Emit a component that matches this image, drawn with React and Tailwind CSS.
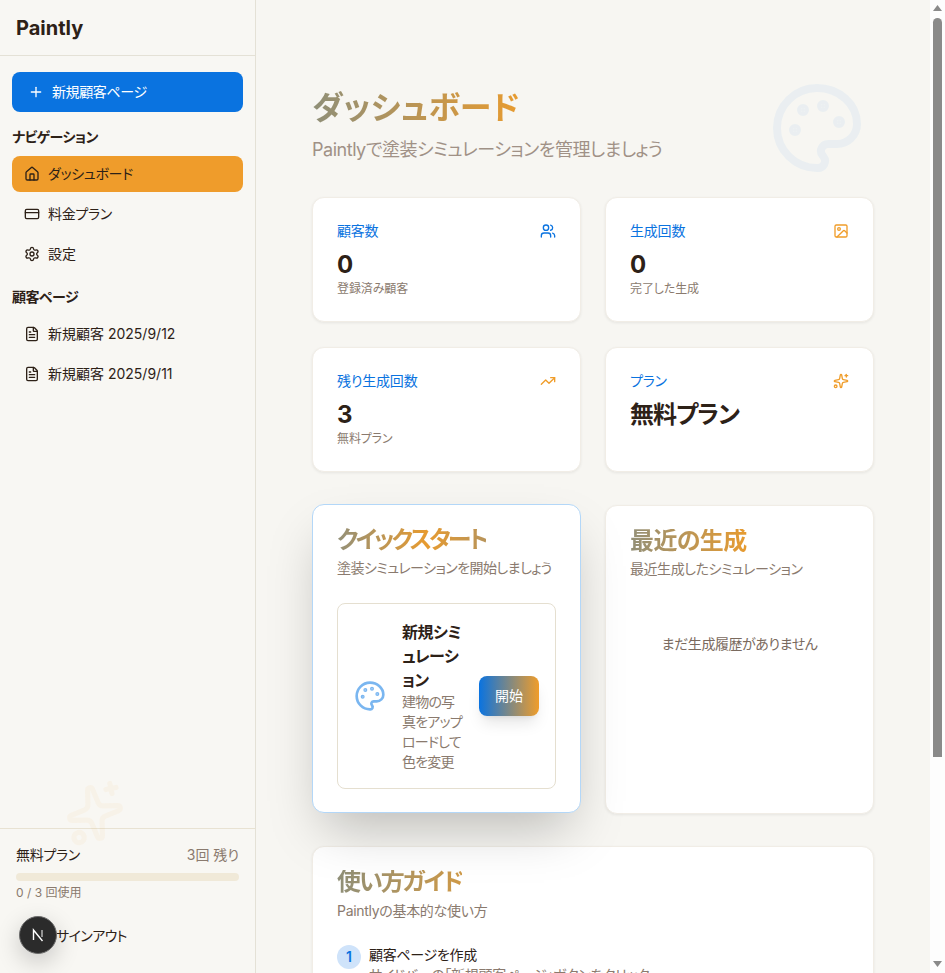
import React from "react";
import { Plus, House, CreditCard, Settings, FileText, Users, Image, TrendingUp, Sparkles, Palette } from "lucide-react";

function NavItem({ icon: Icon, label, active, tight }) {
  return (
    <a className={`flex h-9 items-center gap-2 rounded-lg px-3 text-sm text-[#2d2117] ${tight ? "tracking-[-0.3px]" : ""} ${active ? "bg-[#ef9c2b]" : ""}`}>
      <Icon size={16} strokeWidth={2} className="shrink-0" />
      <span>{label}</span>
    </a>
  );
}

function Stat({ title, value, note, icon: Icon, iconClass, valueClass }) {
  return (
    <div className="h-[125px] rounded-xl border border-[#f1ede6] bg-white px-6 pt-[23px] shadow-[0_1px_3px_rgba(0,0,0,0.07)]">
      <div className="flex items-center justify-between pb-[8px]">
        <span className="text-sm leading-5 tracking-[-0.2px] text-[#0a73e0]">{title}</span>
        <Icon size={16} className={iconClass} />
      </div>
      <div className={`text-2xl leading-8 font-bold text-[#2d2117] ${valueClass || ""}`}>{value}</div>
      {note && <div className="text-xs leading-4 tracking-[-0.1px] text-[#8a7a6e]">{note}</div>}
    </div>
  );
}

function Step({ n, title, desc }) {
  return (
    <div className="flex gap-2">
      <div className="flex size-6 shrink-0 items-center justify-center rounded-full bg-[#cfe3fa] text-sm font-semibold text-[#0a73e0]">{n}</div>
      <div>
        <div className="text-sm leading-5 tracking-[-0.3px] text-[#2d2117]">{title}</div>
        <div className="text-sm leading-5 tracking-[-0.3px] text-[#8a7a6e]">{desc}</div>
      </div>
    </div>
  );
}

function CardTitle({ children, className }) {
  return (
    <h2 className={`block w-fit bg-clip-text text-2xl leading-6 font-semibold text-transparent ${className}`}>{children}</h2>
  );
}

function ScrollBar() {
  return (
    <div className="sticky top-0 flex h-screen w-[15px] shrink-0 flex-col items-center bg-[#fdfdfd]">
      <svg width="9" height="6" viewBox="0 0 9 6" className="mt-[5px] shrink-0"><path d="M4.5 0L9 6H0Z" fill="#8a8a8a" /></svg>
      <div className="mt-[7px] h-[739px] w-[9px] shrink-0 rounded-t-full rounded-b-[4px] bg-[#8a8a8a]" />
      <svg width="9" height="6" viewBox="0 0 9 6" className="mt-[204px] shrink-0"><path d="M0 0H9L4.5 6Z" fill="#8a8a8a" /></svg>
    </div>
  );
}

export default function App() {
  return (
    <div className="flex min-h-screen bg-[#f7f6f2] font-['Inter','Noto_Sans_CJK_JP',sans-serif] [font-feature-settings:'palt']">
      <aside className="sticky top-0 flex h-screen w-64 shrink-0 flex-col border-r border-[#e4e1d6] bg-[#f8f7f3]">
        <div className="flex h-14 items-center border-b border-[#e4e1d6] px-4">
          <span className="text-xl font-bold text-[#2d2117]">Paintly</span>
        </div>
        <div className="flex flex-1 flex-col px-3 pt-4">
          <button className="flex h-10 items-center gap-2 rounded-lg bg-[#0a73e0] px-4 text-sm tracking-[-0.4px] text-white">
            <Plus size={16} />
            新規顧客ページ
          </button>
          <div className="mt-[15px] mb-[9px] text-sm leading-5 font-semibold tracking-[-0.5px] text-[#2d2117]">ナビゲーション</div>
          <nav className="flex flex-col gap-1">
            <NavItem icon={House} label="ダッシュボード" active tight />
            <NavItem icon={CreditCard} label="料金プラン" tight />
            <NavItem icon={Settings} label="設定" />
          </nav>
          <div className="mt-[15px] mb-[9px] text-sm leading-5 font-semibold tracking-[-0.5px] text-[#2d2117]">顧客ページ</div>
          <nav className="flex flex-col gap-1">
            <NavItem icon={FileText} label="新規顧客 2025/9/12" />
            <NavItem icon={FileText} label="新規顧客 2025/9/11" />
          </nav>
        </div>
        <div className="border-t border-[#e8e2d2] px-4 pt-4 pb-[17px]">
          <div className="flex items-center justify-between text-sm leading-5">
            <span className="tracking-[-0.3px] text-[#2d2117]">無料プラン</span>
            <span className="text-[#8a7a6e]">3回 残り</span>
          </div>
          <div className="mt-2 h-2 rounded-full bg-[#f0e9d8]" />
          <div className="mt-1 text-xs leading-4 text-[#8a7a6e]">0 / 3 回使用</div>
          <div className="mt-[15px] flex h-10 items-center pl-10 text-sm tracking-[-0.6px] text-[#2d2117]">サインアウト</div>
        </div>
        <Sparkles size={62} strokeWidth={2} className="absolute top-[782px] left-[64px] -rotate-12 text-[#f09d2a] opacity-[0.05]" />
      </aside>

      <main className="relative min-w-0 flex-1 px-14 pt-[85px] pb-14">
        <Palette size={96} strokeWidth={2} className="absolute top-[80px] left-[513px] text-[#0a73e0] opacity-[0.05]" />
        <h1 className="block w-fit bg-[linear-gradient(90deg,#8f8f78,#e79b30)] bg-clip-text text-[32px] leading-[46px] font-bold tracking-[0.3px] text-transparent">ダッシュボード</h1>
        <p className="mt-[7px] text-lg leading-6 tracking-[-0.47px] text-[#a09186]">Paintlyで塗装シミュレーションを管理しましょう</p>

        <div className="mt-[35px] grid grid-cols-2 gap-x-6 gap-y-[25px]">
          <Stat title="顧客数" value="0" note="登録済み顧客" icon={Users} iconClass="text-[#0a73e0]" />
          <Stat title="生成回数" value="0" note="完了した生成" icon={Image} iconClass="text-[#f09d2a]" />
          <Stat title="残り生成回数" value="3" note="無料プラン" icon={TrendingUp} iconClass="text-[#f09d2a]" />
          <Stat title="プラン" value="無料プラン" valueClass="tracking-[-1px]" icon={Sparkles} iconClass="text-[#f09d2a]" />
        </div>

        <div className="mt-[33px] grid grid-cols-2 gap-6">
          <section className="h-[309px] -translate-y-px rounded-xl border border-[#b3d7f8] bg-white px-6 pt-[23px] shadow-2xl">
            <CardTitle className="bg-[linear-gradient(90deg,#939078,#e79b30_60%,#b8945a)] tracking-[-2.9px]">クイックスタート</CardTitle>
            <p className="mt-[6px] text-sm leading-5 tracking-[-0.55px] text-[#8a7a6e]">塗装シミュレーションを開始しましょう</p>
            <div className="mt-[25px] flex items-center gap-4 rounded-lg border border-[#e5dfd0] p-4">
              <Palette size={32} className="shrink-0 text-[#7ab6f0]" />
              <div className="min-w-0 flex-1 [line-break:anywhere]">
                <div className="text-base leading-6 font-semibold tracking-[-0.5px] text-[#2d2117]">新規シミュレーション</div>
                <div className="text-sm leading-5 tracking-[-0.8px] text-[#8a7a6e]">建物の写真をアップロードして色を変更</div>
              </div>
              <button className="h-10 w-[60px] shrink-0 rounded-lg bg-[linear-gradient(90deg,#0a73e0,#f09d2a)] text-sm text-white shadow-lg">開始</button>
            </div>
          </section>
          <section className="h-[309px] rounded-xl border border-[#f1ede6] bg-white px-6 pt-[23px] shadow-[0_1px_3px_rgba(0,0,0,0.07)]">
            <CardTitle className="bg-[linear-gradient(90deg,#939078,#e79b30)] tracking-[-0.6px]">最近の生成</CardTitle>
            <p className="mt-[6px] text-sm leading-5 tracking-[-0.45px] text-[#8a7a6e]">最近生成したシミュレーション</p>
            <p className="pt-[55px] text-center text-sm leading-5 tracking-[-0.45px] text-[#7a6a5e]">まだ生成履歴がありません</p>
          </section>
        </div>

        <section className="mt-[32px] rounded-xl border border-[#f1ede6] bg-white px-6 pt-[23px] pb-6 shadow-[0_1px_3px_rgba(0,0,0,0.07)]">
          <CardTitle className="bg-[linear-gradient(90deg,#8f8f78,#cf9a48)] tracking-[-2px]">使い方ガイド</CardTitle>
          <p className="mt-[7px] text-sm leading-5 tracking-[-0.3px] text-[#8a7a6e]">Paintlyの基本的な使い方</p>
          <div className="mt-6 flex flex-col gap-4">
            <Step n="1" title="顧客ページを作成" desc="サイドバーの「新規顧客ページ」ボタンをクリック" />
            <Step n="2" title="建物の写真をアップロード" desc="塗装したい建物の写真を選択" />
            <Step n="3" title="色を選択" desc="希望の塗料カラーを選択" />
            <Step n="4" title="シミュレーションを生成" desc="生成された画像を確認して保存" />
          </div>
        </section>
      </main>

      <ScrollBar />

      <div className="fixed top-[916px] left-[19px] flex size-[38px] items-center justify-center rounded-full border border-[#6b6b6b] bg-[#2b2b2b] shadow-[0_8px_24px_rgba(0,0,0,0.2)]">
        <svg width="16" height="16" viewBox="0 0 16 16" fill="none">
          <path d="M3.5 13V3L12.5 14" stroke="white" strokeWidth="1.4" />
          <path d="M12 3V10" stroke="white" strokeOpacity="0.7" strokeWidth="1.4" />
        </svg>
      </div>
    </div>
  );
}
